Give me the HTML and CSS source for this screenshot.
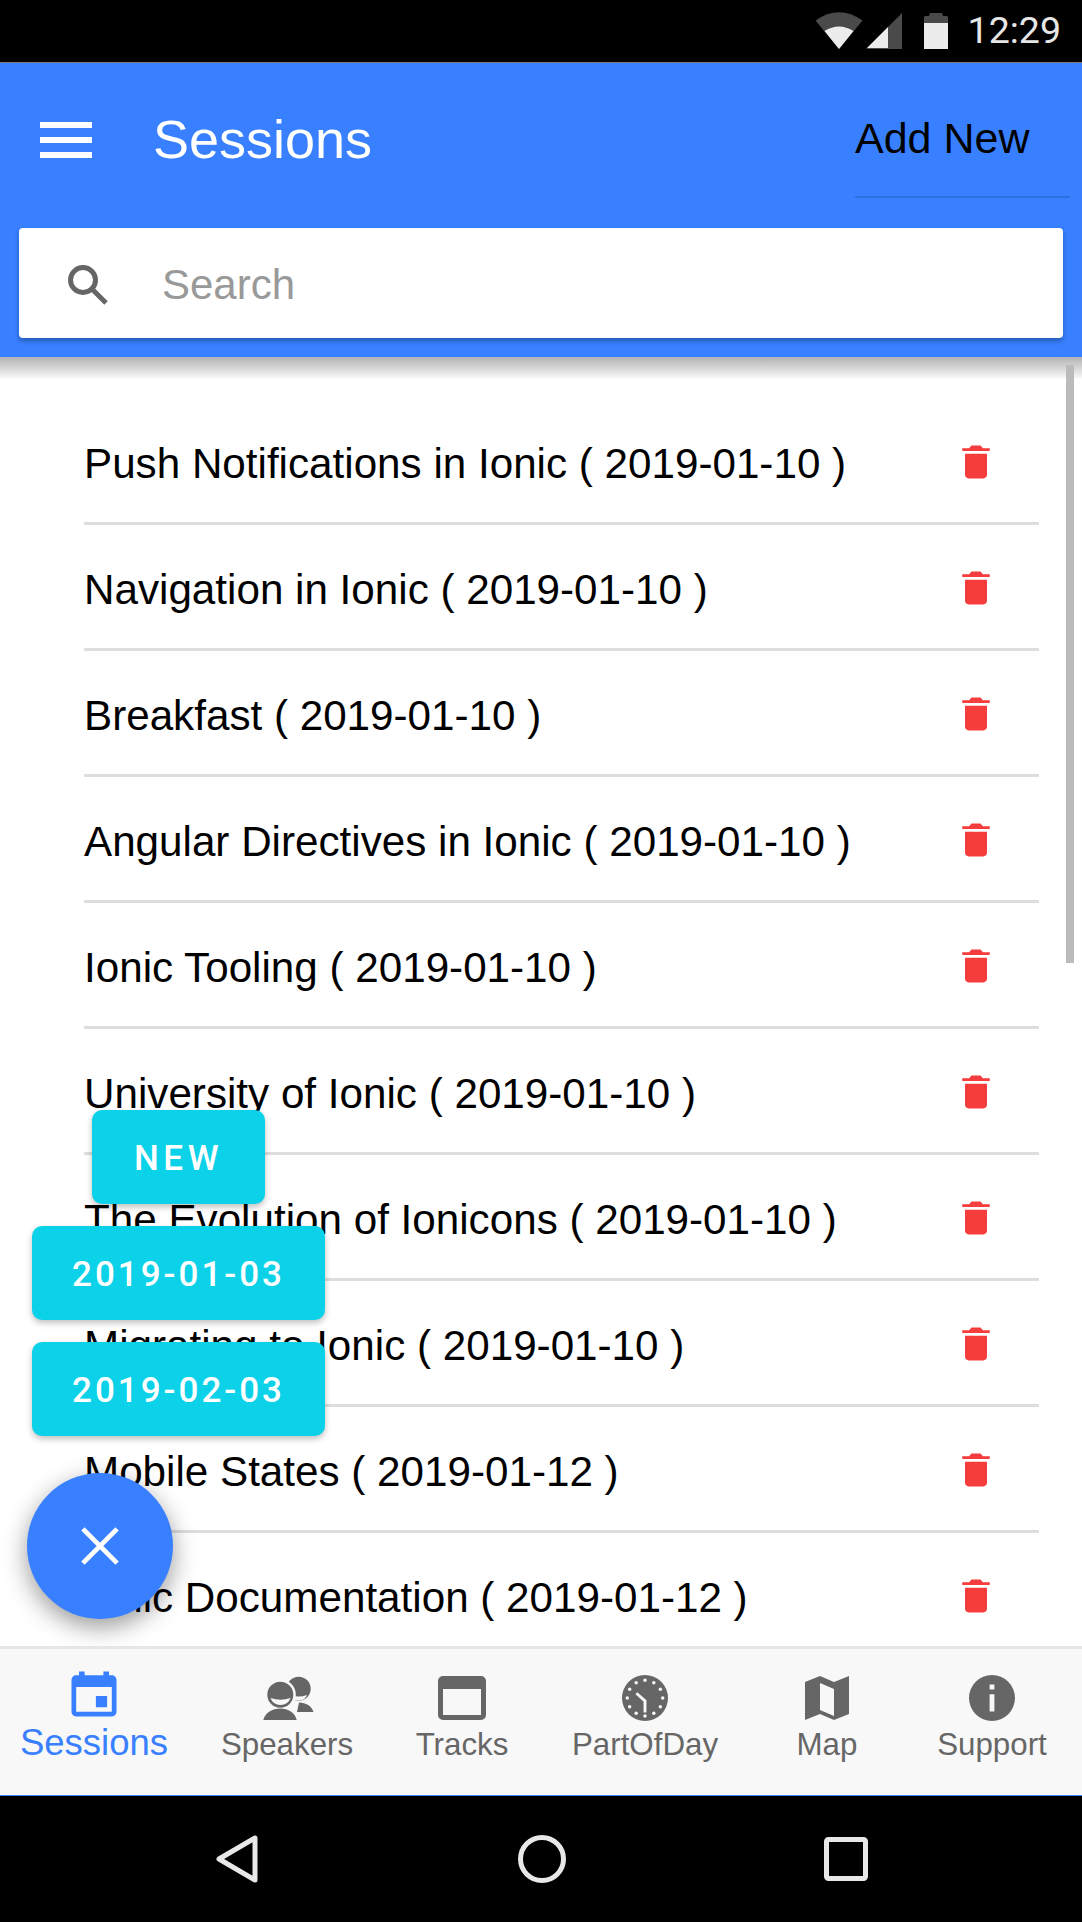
FILE: index.html
```html
<!DOCTYPE html>
<html lang="en">
<head>
<meta charset="utf-8">
<title>Sessions</title>
<link rel="stylesheet" href="styles.css">
</head>
<body>
<div class="app">
  <div class="statusbar">
    <svg class="st-wifi" viewBox="0 0 48 38"><path class="dim" d="M24 37 .5 8.500Q24-8 47.500 8.500z"/><path class="lit" d="M24 37 9.500 19Q24 10 38.500 19z"/></svg>
    <svg class="st-signal" viewBox="0 0 36 36"><path class="dim" d="M36 0v36H0z"/><path class="lit" d="M22 14v21H1z"/></svg>
    <svg class="st-battery" viewBox="0 0 24 36"><path class="dim" d="M6 0h12l1 3h4l1 1v7H0V4l1-1h4z"/><path class="lit" d="M0 10h24v26H0z"/></svg>
    <span class="st-time">12:29</span>
  </div>
  <header class="header">
    <div class="toolbar">
      <button class="burger" aria-label="Menu"><span></span><span></span><span></span></button>
      <h1 class="title">Sessions</h1>
      <div class="addnew"><span class="addnew-text">Add New</span></div>
    </div>
    <div class="searchbar">
      <svg class="search-icon" viewBox="0 0 42 42"><circle cx="16" cy="16" r="12.500"/><path d="M25 25l14 14"/></svg>
      <span class="search-ph">Search</span>
    </div>
  </header>
  <main class="content">
    <div class="scrollbar"></div>
    <ul class="list">
      <li class="row"><span class="row-text">Push Notifications in Ionic ( 2019-01-10 )</span><svg class="trash" viewBox="0 0 512 512"><path d="M128 405.400C128 428.800 147.200 448 170.700 448h170.600c23.500 0 42.700-19.200 42.700-42.600V160H128zM416 96h-80l-26.800-32H202.800L176 96H96v32h320z"/></svg></li>
      <li class="row"><span class="row-text">Navigation in Ionic ( 2019-01-10 )</span><svg class="trash" viewBox="0 0 512 512"><path d="M128 405.400C128 428.800 147.200 448 170.700 448h170.600c23.500 0 42.700-19.200 42.700-42.600V160H128zM416 96h-80l-26.800-32H202.800L176 96H96v32h320z"/></svg></li>
      <li class="row"><span class="row-text">Breakfast ( 2019-01-10 )</span><svg class="trash" viewBox="0 0 512 512"><path d="M128 405.400C128 428.800 147.200 448 170.700 448h170.600c23.500 0 42.700-19.200 42.700-42.600V160H128zM416 96h-80l-26.800-32H202.800L176 96H96v32h320z"/></svg></li>
      <li class="row"><span class="row-text">Angular Directives in Ionic ( 2019-01-10 )</span><svg class="trash" viewBox="0 0 512 512"><path d="M128 405.400C128 428.800 147.200 448 170.700 448h170.600c23.500 0 42.700-19.200 42.700-42.600V160H128zM416 96h-80l-26.800-32H202.800L176 96H96v32h320z"/></svg></li>
      <li class="row"><span class="row-text">Ionic Tooling ( 2019-01-10 )</span><svg class="trash" viewBox="0 0 512 512"><path d="M128 405.400C128 428.800 147.200 448 170.700 448h170.600c23.500 0 42.700-19.200 42.700-42.600V160H128zM416 96h-80l-26.800-32H202.800L176 96H96v32h320z"/></svg></li>
      <li class="row"><span class="row-text">University of Ionic ( 2019-01-10 )</span><svg class="trash" viewBox="0 0 512 512"><path d="M128 405.400C128 428.800 147.200 448 170.700 448h170.600c23.500 0 42.700-19.200 42.700-42.600V160H128zM416 96h-80l-26.800-32H202.800L176 96H96v32h320z"/></svg></li>
      <li class="row"><span class="row-text">The Evolution of Ionicons ( 2019-01-10 )</span><svg class="trash" viewBox="0 0 512 512"><path d="M128 405.400C128 428.800 147.200 448 170.700 448h170.600c23.500 0 42.700-19.200 42.700-42.600V160H128zM416 96h-80l-26.800-32H202.800L176 96H96v32h320z"/></svg></li>
      <li class="row"><span class="row-text">Migrating to Ionic ( 2019-01-10 )</span><svg class="trash" viewBox="0 0 512 512"><path d="M128 405.400C128 428.800 147.200 448 170.700 448h170.600c23.500 0 42.700-19.200 42.700-42.600V160H128zM416 96h-80l-26.800-32H202.800L176 96H96v32h320z"/></svg></li>
      <li class="row"><span class="row-text">Mobile States ( 2019-01-12 )</span><svg class="trash" viewBox="0 0 512 512"><path d="M128 405.400C128 428.800 147.200 448 170.700 448h170.600c23.500 0 42.700-19.200 42.700-42.600V160H128zM416 96h-80l-26.800-32H202.800L176 96H96v32h320z"/></svg></li>
      <li class="row"><span class="row-text">Ionic Documentation ( 2019-01-12 )</span><svg class="trash" viewBox="0 0 512 512"><path d="M128 405.400C128 428.800 147.200 448 170.700 448h170.600c23.500 0 42.700-19.200 42.700-42.600V160H128zM416 96h-80l-26.800-32H202.800L176 96H96v32h320z"/></svg></li>
    </ul>
    <div class="fab-stack">
      <button class="chip chip-new">NEW</button>
      <button class="chip">2019-01-03</button>
      <button class="chip">2019-02-03</button>
      <button class="fab" aria-label="Close"><svg class="fab-x" viewBox="0 0 40 40"><path d="M2 2l36 36M38 2 2 38"/></svg></button>
    </div>
  </main>
  <nav class="tabbar">
    <div class="tab active">
      <svg class="tab-icon" viewBox="0 0 512 512"><path d="M368 272h-96v96h96zM336 64v32H176V64h-48v32h-24c-22 0-40 18-40 40v272c0 22 18 40 40 40h304c22 0 40-18 40-40V136c0-22-18-40-40-40h-24V64zm72 344H104V196h304z"/></svg>
      <span class="tab-label">Sessions</span>
    </div>
    <div class="tab">
      <svg class="tab-icon" viewBox="10 10 54 46"><circle cx="48.700" cy="23.700" r="12"/><path d="M49 37.500c7 0 12.500 3.500 14.500 9.500H47z"/><path class="cut-fill" d="M40 30q9 3 17 0-2 5.500-8.500 5.500T40 30z"/><circle class="ring" cx="30.300" cy="29.700" r="15.500"/><path class="ring" d="M11 57c2-9 10-16 19-16s18 7 20 16z"/><circle cx="30.300" cy="29.700" r="13"/><path d="M13.300 55c2-7.500 9-11.500 17-11.500s14.500 4 16.400 11.500z"/><path class="cut-fill" d="M20.500 33q10 3.500 20 0-2.500 7-10 7t-10-7z"/></svg>
      <span class="tab-label">Speakers</span>
    </div>
    <div class="tab">
      <svg class="tab-icon" viewBox="-3 0 54 46"><path fill-rule="evenodd" d="M5 1h38a5 5 0 0 1 5 5v34a5 5 0 0 1-5 5H5a5 5 0 0 1-5-5V6a5 5 0 0 1 5-5zm0 13v26h38V14z"/></svg>
      <span class="tab-label">Tracks</span>
    </div>
    <div class="tab">
      <svg class="tab-icon" viewBox="0 0 48 48"><circle cx="24" cy="24" r="24"/><g class="clock-dots"><circle cx="24" cy="5.500" r="1.800"/><circle cx="33.200" cy="8" r="1.800"/><circle cx="40" cy="14.800" r="1.800"/><circle cx="42.500" cy="24" r="1.800"/><circle cx="40" cy="33.200" r="1.800"/><circle cx="33.200" cy="40" r="1.800"/><circle cx="24" cy="42.800" r="1.800"/><circle cx="14.800" cy="40" r="1.800"/><circle cx="8" cy="33.200" r="1.800"/><circle cx="5.500" cy="24" r="1.800"/><circle cx="8" cy="14.800" r="1.800"/><circle cx="14.800" cy="8" r="1.800"/></g><path class="clock-hand" d="M15 19 24 27V39"/></svg>
      <span class="tab-label">PartOfDay</span>
    </div>
    <div class="tab">
      <svg class="tab-icon" viewBox="-5 -1 54 46"><path fill-rule="evenodd" d="M0 6 15 0l14 6 15-6v38l-15 6-14-6-15 6zM15 7v27l14 6V13z"/></svg>
      <span class="tab-label">Map</span>
    </div>
    <div class="tab">
      <svg class="tab-icon" viewBox="0 0 48 48"><path fill-rule="evenodd" d="M24 0a24 24 0 1 1 0 48 24 24 0 0 1 0-48zm-2.500 10v5h5v-5zm0 10v18h5V20z"/></svg>
      <span class="tab-label">Support</span>
    </div>
  </nav>
  <div class="navbar">
    <svg class="nav-back" viewBox="0 0 42 50"><path d="M39 4v42L3 25z"/></svg>
    <svg class="nav-home" viewBox="0 0 48 48"><circle cx="24" cy="24" r="21.500"/></svg>
    <svg class="nav-recent" viewBox="0 0 44 44"><rect x="2.500" y="2.500" width="39" height="39" rx="2"/></svg>
  </div>
</div>
</body>
</html>
```
FILE: styles.css
```css
* { box-sizing: border-box; }
html, body { margin: 0; padding: 0; background: #fff; }
body { font-family: "Liberation Sans", Arial, sans-serif; }
.app { width: 1082px; height: 1922px; display: flex; flex-direction: column; overflow: hidden; }

.statusbar { height: 62px; flex: none; background: #000; display: flex; align-items: center; padding: 0 21px 0 0; justify-content: flex-end; }
.statusbar .dim { fill: #4a4a4a; }
.statusbar .lit { fill: #ececec; }
.st-wifi { width: 48px; height: 38px; margin-right: 3px; }
.st-signal { width: 36px; height: 36px; margin-right: 22px; }
.st-battery { width: 24px; height: 36px; margin-right: 20px; }
.st-time { font-family: Roboto, "Liberation Sans", sans-serif; font-size: 37.500px; font-weight: 400; color: #e6e6e6; line-height: 1; }

.header { flex: none; height: 295px; background: #3880ff; border-top: 1px solid #7a7a7a; position: relative; z-index: 2; padding: 0 19px; display: flex; flex-direction: column; }
.toolbar { height: 165px; flex: none; display: flex; align-items: center; padding-left: 21px; }
.burger { width: 52px; height: 36px; padding: 0; border: 0; background: none; display: flex; flex-direction: column; justify-content: space-between; margin-top: -12px; }
.burger span { height: 6px; background: #fff; display: block; }
.title { margin: -14px 0 0 61px; flex: 1; color: #fff; font-size: 54px; font-weight: 400; line-height: 1; }
.addnew { align-self: flex-start; width: 215px; margin-right: -7px; height: 135px; border-bottom: 2px solid #2d6fe0; padding-top: 54px; }
.addnew-text { font-size: 43px; color: #000; line-height: 1; }

.searchbar { height: 110px; flex: none; background: #fff; border-radius: 4px; box-shadow: 0 3px 5px rgba(0,0,0,.3); display: flex; align-items: center; padding: 4px 0 0 48px; }
.search-icon { width: 42px; height: 42px; fill: none; stroke: #666; stroke-width: 5; margin-right: 53px; flex: none; }
.search-ph { font-size: 42px; color: #999; }

.content { flex: 1; min-height: 0; position: relative; overflow: hidden; background: #fff; }
.content::before { content: ""; position: absolute; top: 0; left: 0; right: 0; height: 21px; background: linear-gradient(rgba(0,0,0,.3), rgba(0,0,0,.03)); }
.scrollbar { position: absolute; top: 8px; right: 8px; width: 8px; height: 598px; background: #bbb; }
.list { list-style: none; margin: 0; padding: 42px 0 0 84px; }
.row { height: 126px; width: 955px; border-bottom: 3px solid #ddd; display: flex; align-items: center; justify-content: space-between; padding-right: 41px; }
.row-text { font-size: 42.200px; color: #000; white-space: nowrap; padding-top: 6px; }
.trash { width: 44px; height: 44px; fill: #f53d3d; flex: none; margin-top: 2px; }

.fab-stack { position: absolute; left: 32px; top: 753px; width: 293px; display: flex; flex-direction: column; align-items: center; }
.chip { height: 94px; border: 0; padding: 2px 0 0; border-radius: 10px; background: #0bd2e8; color: #fff; font: 500 35px Roboto, "Liberation Sans", sans-serif; letter-spacing: 3px; width: 293px; box-shadow: 0 3px 6px rgba(0,0,0,.25); margin-bottom: 22px; flex: none; }
.chip-new { width: 173px; letter-spacing: 4.500px; }
.fab { width: 146px; height: 146px; border: 0; border-radius: 50%; background: #3880ff; box-shadow: 0 8px 24px rgba(0,0,0,.4); align-self: flex-start; margin: 15px 0 0 -5px; display: flex; align-items: center; justify-content: center; padding: 0; }
.fab-x { width: 38px; height: 38px; stroke: #fff; stroke-width: 5; fill: none; }

.tabbar { flex: none; height: 150px; background: #f8f8f8; border-top: 3px solid #e6e6e6; border-bottom: 1px solid #3880ff; display: grid; grid-template-columns: 188px 198px 152px 214px 150px 180px; padding-top: 26px; }
.tab { display: flex; flex-direction: column; align-items: center; color: #666; }
.tab-icon { height: 46px; width: 54px; fill: #666; display: block; }
.tab-label { font-size: 31.300px; line-height: 36px; margin-top: 6px; white-space: nowrap; }
.tab.active { color: #3880ff; }
.tab.active .tab-icon { fill: #3880ff; height: 60px; width: 60px; margin-top: -11px; margin-bottom: -5px; }
.tab.active .tab-label { font-size: 36.500px; }
.cut-fill { fill: #f8f8f8; }
.ring { fill: #f8f8f8; }
.clock-dots { fill: #f8f8f8; }
.clock-hand { fill: none; stroke: #f8f8f8; stroke-width: 3; }

.navbar { flex: none; height: 126px; background: #000; display: flex; align-items: center; padding-left: 216px; }
.navbar svg { fill: none; stroke: #e8e8e8; stroke-width: 5; stroke-linejoin: round; flex: none; }
.nav-back { width: 42px; height: 50px; margin-right: 260px; }
.nav-home { width: 48px; height: 48px; margin-right: 258px; }
.nav-recent { width: 44px; height: 44px; }
```
